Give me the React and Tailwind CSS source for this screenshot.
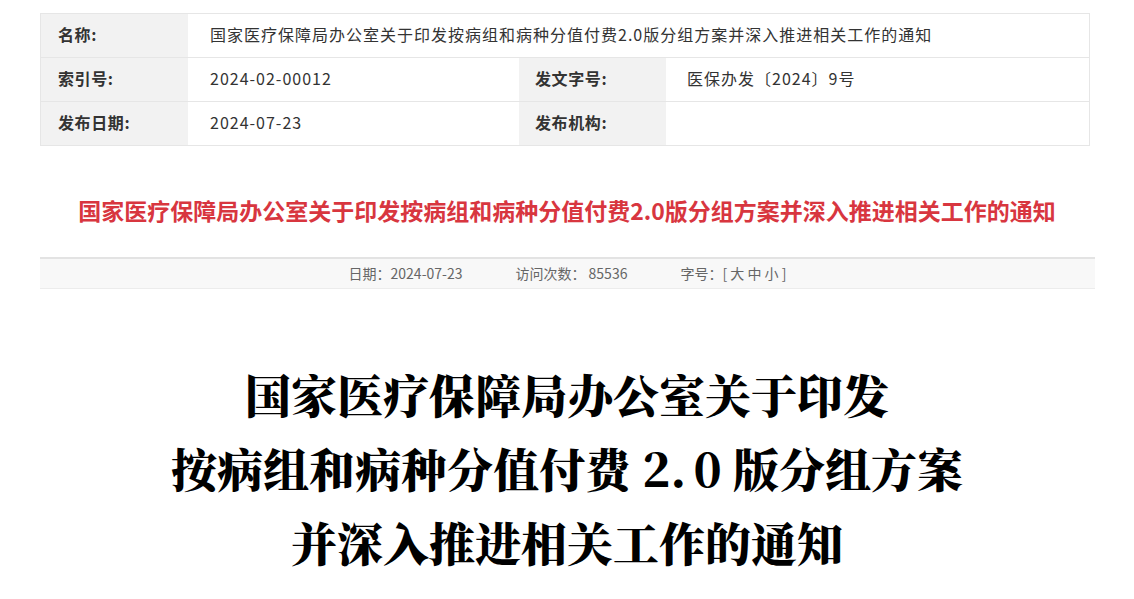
export default function App() {
  const font = { fontFamily: '"Microsoft YaHei", "Noto Sans CJK SC", sans-serif' }
  return (
    <div className="min-h-screen bg-white text-[#333]" style={font}>
      <div className="pl-[40px] pr-[44px] pt-[13px]">
        {/* meta table */}
        <div className="border border-[#e6e6e6] text-[16px] tracking-[1px]">
          <div className="flex h-[44px] border-b border-[#e6e6e6]">
            <div className="w-[147px] shrink-0 bg-[#f2f2f2] pl-[17px] pb-[4px] flex items-center font-bold tracking-[0.6px]">名称:</div>
            <div className="flex-1 pl-[22px] pb-[4px] flex items-center">国家医疗保障局办公室关于印发按病组和病种分值付费2.0版分组方案并深入推进相关工作的通知</div>
          </div>
          <div className="flex h-[44px] border-b border-[#e6e6e6]">
            <div className="w-[147px] shrink-0 bg-[#f2f2f2] pl-[17px] pb-[4px] flex items-center font-bold tracking-[0.6px]">索引号:</div>
            <div className="w-[331px] shrink-0 pl-[22px] pb-[4px] flex items-center">2024-02-00012</div>
            <div className="w-[147px] shrink-0 bg-[#f2f2f2] pl-[16px] pb-[4px] flex items-center font-bold tracking-[0.6px]">发文字号:</div>
            <div className="flex-1 pl-[21px] pb-[4px] flex items-center">医保办发〔2024〕9号</div>
          </div>
          <div className="flex h-[43px]">
            <div className="w-[147px] shrink-0 bg-[#f2f2f2] pl-[17px] pb-[4px] flex items-center font-bold tracking-[0.6px]">发布日期:</div>
            <div className="w-[331px] shrink-0 pl-[22px] pb-[4px] flex items-center">2024-07-23</div>
            <div className="w-[147px] shrink-0 bg-[#f2f2f2] pl-[16px] pb-[4px] flex items-center font-bold tracking-[0.6px]">发布机构:</div>
            <div className="flex-1 pl-[21px] flex items-center"></div>
          </div>
        </div>
      </div>

      {/* red title */}
      <h1 className="mt-[47px] text-center text-[23px] leading-[34px] font-bold text-[#d8363f]">
        国家医疗保障局办公室关于印发按病组和病种分值付费2.0版分组方案并深入推进相关工作的通知
      </h1>

      {/* info bar */}
      <div className="ml-[40px] mr-[39px] mt-[30px] h-[32px] border-t-2 border-[#e3e3e3] border-b border-b-[#ececec] bg-[#f8f8f8] flex items-center justify-center text-[14px] text-[#666] gap-[53px]">
        <span>日期：2024-07-23</span>
        <span>访问次数： 85536</span>
        <span>字号：[ 大 中 小 ]</span>
      </div>

      {/* body heading */}
      <div
        className="mt-[67px] text-center text-[46px] leading-[74px] font-black text-black"
        style={{ fontFamily: '"SimSun", "Noto Serif CJK SC", "Noto Sans CJK SC", serif' }}
      >
        <p>国家医疗保障局办公室关于印发</p>
        <p>按病组和病种分值付费 2.<span className="tracking-[-4px]"> </span>0 版分组方案</p>
        <p>并深入推进相关工作的通知</p>
      </div>
    </div>
  )
}
